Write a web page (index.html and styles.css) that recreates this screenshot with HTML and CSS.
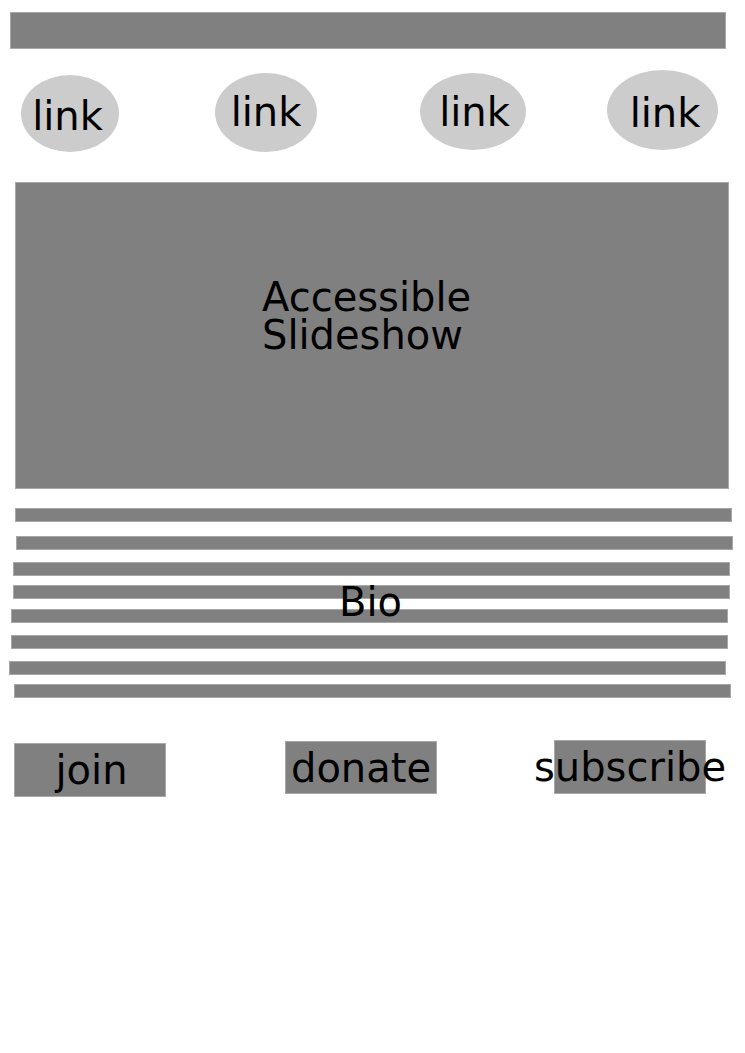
FILE: index.html
```html
<!DOCTYPE html>
<html lang="en">
<head>
<meta charset="utf-8">
<title>Wireframe</title>
<link rel="stylesheet" href="styles.css">
</head>
<body>
  <header class="topbar"></header>

  <nav class="links">
    <a class="link link-1">link</a>
    <a class="link link-2">link</a>
    <a class="link link-3">link</a>
    <a class="link link-4">link</a>
  </nav>

  <section class="slideshow">
    <div class="slideshow-line">Accessible</div>
    <div class="slideshow-line">Slideshow</div>
  </section>

  <section class="bio">
    <div class="bio-line l1"></div>
    <div class="bio-line l2"></div>
    <div class="bio-line l3"></div>
    <div class="bio-line l4"></div>
    <div class="bio-line l5"></div>
    <div class="bio-line l6"></div>
    <div class="bio-line l7"></div>
    <div class="bio-line l8"></div>
    <span class="bio-label">Bio</span>
  </section>

  <div class="actions">
    <a class="btn btn-join">join</a>
    <a class="btn btn-donate">donate</a>
    <a class="btn btn-subscribe">subscribe</a>
  </div>
</body>
</html>
```

FILE: styles.css
```css
html, body {
  margin: 0;
  padding: 0;
  background: #ffffff;
}

body {
  font-family: "DejaVu Sans", "Liberation Sans", sans-serif;
  font-size: 40px;
  color: #000000;
  width: 745px;
}

.topbar {
  box-sizing: border-box;
  margin: 12px 0 0 10px;
  width: 716px;
  height: 37px;
  background: #808080;
  border: 1px solid #a8a8a8;
}

.links {
  display: flex;
  align-items: flex-start;
  margin-top: 21px;
  height: 82px;
}

.link {
  display: flex;
  align-items: center;
  justify-content: center;
  background: #cccccc;
  border-radius: 50%;
  line-height: 1;
  color: #000;
  text-decoration: none;
}

.link-1 { margin: 5px 0 0 21px; width: 98px; height: 77px; padding: 4px 5px 0 0; box-sizing: border-box; }
.link-2 { margin: 3px 0 0 96px; width: 102px; height: 79px; padding: 0 0 2px 0; box-sizing: border-box; }
.link-3 { margin: 3px 0 0 103px; width: 106px; height: 77px; padding: 0 0 0 3px; box-sizing: border-box; }
.link-4 { margin: 0 0 0 81px; width: 111px; height: 80px; padding: 6px 0 0 5px; box-sizing: border-box; }

.slideshow {
  box-sizing: border-box;
  margin: 30px 0 0 15px;
  width: 714px;
  height: 307px;
  background: #808080;
  border: 1px solid #a8a8a8;
  padding: 95px 0 0 246px;
}

.slideshow-line {
  height: 38px;
  line-height: 38px;
  white-space: nowrap;
}

.bio {
  position: relative;
  margin-top: 19px;
}

.bio-line {
  box-sizing: border-box;
  width: 717px;
  height: 14px;
  background: #808080;
  border: 1px solid #a8a8a8;
}

.l1 { margin: 0 0 0 15px; }
.l2 { margin: 14px 0 0 16px; }
.l3 { margin: 12px 0 0 13px; }
.l4 { margin: 9px 0 0 13px; }
.l5 { margin: 10px 0 0 11px; }
.l6 { margin: 12px 0 0 11px; }
.l7 { margin: 12px 0 0 9px; }
.l8 { margin: 9px 0 0 14px; }

.bio-label {
  position: absolute;
  left: 339px;
  top: 71px;
}

.actions {
  display: flex;
  align-items: flex-start;
  margin-top: 42px;
}

.btn {
  box-sizing: border-box;
  display: flex;
  align-items: center;
  justify-content: center;
  width: 152px;
  background: #808080;
  border: 1px solid #a8a8a8;
  white-space: nowrap;
  color: #000;
  text-decoration: none;
}

.btn-join { margin: 3px 0 0 14px; height: 54px; padding-left: 3px; }
.btn-donate { margin: 1px 0 0 119px; height: 53px; }
.btn-subscribe { margin: 0 0 0 117px; height: 54px; }
```
